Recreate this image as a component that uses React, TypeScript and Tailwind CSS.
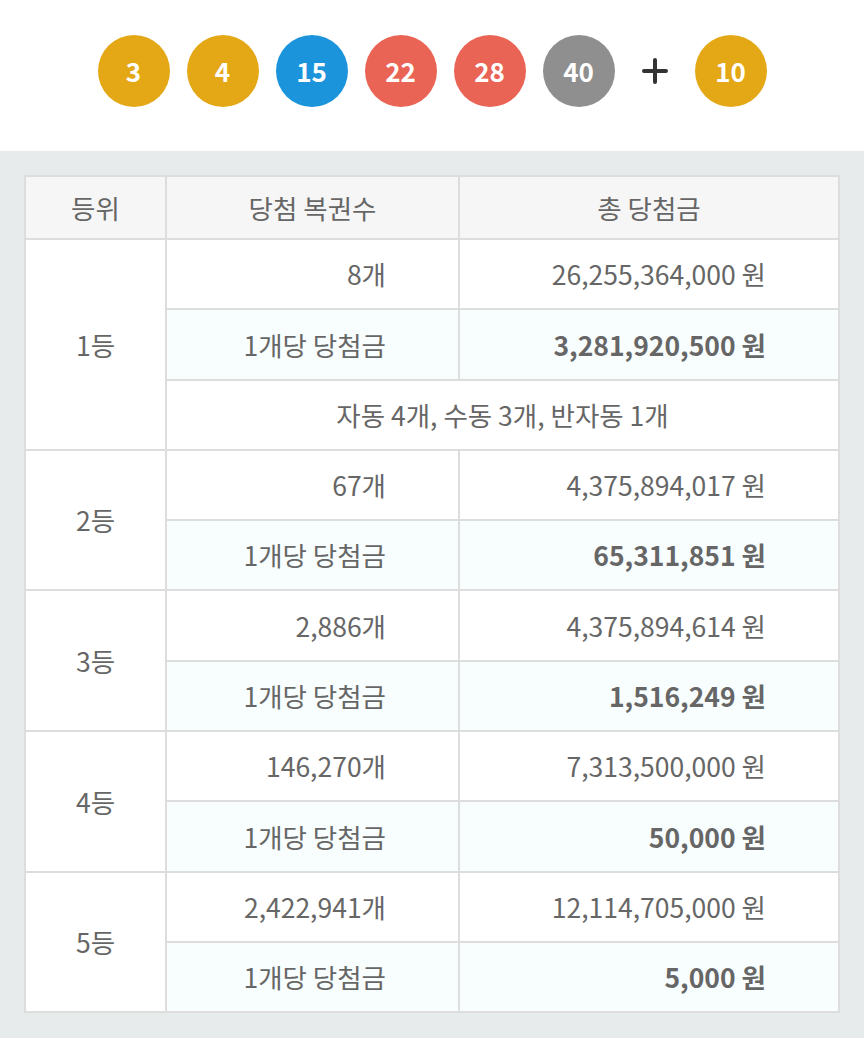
import React from "react";

const balls = [
  { n: 3, color: "bg-[#e4a816]" },
  { n: 4, color: "bg-[#e4a816]" },
  { n: 15, color: "bg-[#1b94db]" },
  { n: 22, color: "bg-[#ea6455]" },
  { n: 28, color: "bg-[#ea6455]" },
  { n: 40, color: "bg-[#8f8f8f]" },
];

type Rank = {
  rank: string;
  count: string;
  total: string;
  each: string;
  note?: string;
};

const ranks: Rank[] = [
  { rank: "1등", count: "8개", total: "26,255,364,000 원", each: "3,281,920,500 원", note: "자동 4개, 수동 3개, 반자동 1개" },
  { rank: "2등", count: "67개", total: "4,375,894,017 원", each: "65,311,851 원" },
  { rank: "3등", count: "2,886개", total: "4,375,894,614 원", each: "1,516,249 원" },
  { rank: "4등", count: "146,270개", total: "7,313,500,000 원", each: "50,000 원" },
  { rank: "5등", count: "2,422,941개", total: "12,114,705,000 원", each: "5,000 원" },
];

function Ball({ n, color }: { n: number; color: string }) {
  return (
    <div className={`w-[72px] h-[72px] rounded-full flex items-center justify-center text-white text-[26px] font-bold ${color}`}>
      {n}
    </div>
  );
}

const cell = "border-2 border-[#dddddd] text-[26.5px] text-[#666666] h-[70.3px]";

export default function App() {
  return (
    <div className="w-[864px] h-[1038px] bg-[#e8ebec] font-['Noto_Sans_CJK_KR','Noto_Sans',sans-serif]">
      <div className="bg-white h-[151px] flex items-center justify-center pb-[10px]">
        <div className="flex items-center gap-[17px]">
          {balls.map((b) => (
            <Ball key={b.n} n={b.n} color={b.color} />
          ))}
          <div className="w-[46px] flex justify-center">
            <svg width="26" height="26" viewBox="0 0 26 26">
              <path d="M13 2v22M2 13h22" stroke="#333" strokeWidth="4" strokeLinecap="round" />
            </svg>
          </div>
          <Ball n={10} color="bg-[#e4a816]" />
        </div>
      </div>

      <div className="px-[24px] pt-[24px]">
        <table className="w-full border-collapse bg-white">
          <colgroup>
            <col className="w-[141px]" />
            <col className="w-[293px]" />
            <col />
          </colgroup>
          <thead>
            <tr className="bg-[#f6f6f6]">
              <th className={`${cell} font-normal !h-[63px] text-[#555]`}>등위</th>
              <th className={`${cell} font-normal !h-[63px] text-[#555]`}>당첨 복권수</th>
              <th className={`${cell} font-normal !h-[63px] text-[#555]`}>총 당첨금</th>
            </tr>
          </thead>
          <tbody>
            {ranks.map((r) => (
              <React.Fragment key={r.rank}>
                <tr>
                  <td rowSpan={r.note ? 3 : 2} className={`${cell} text-center`}>
                    {r.rank}
                  </td>
                  <td className={`${cell} text-right pr-[72px]`}>{r.count}</td>
                  <td className={`${cell} text-right pr-[72px]`}>{r.total}</td>
                </tr>
                <tr className="bg-[#f8fdfd]">
                  <td className={`${cell} text-right pr-[72px]`}>1개당 당첨금</td>
                  <td className={`${cell} text-right pr-[72px] font-bold text-[#555]`}>{r.each}</td>
                </tr>
                {r.note && (
                  <tr>
                    <td colSpan={2} className={`${cell} text-center`}>
                      {r.note}
                    </td>
                  </tr>
                )}
              </React.Fragment>
            ))}
          </tbody>
        </table>
      </div>
    </div>
  );
}
